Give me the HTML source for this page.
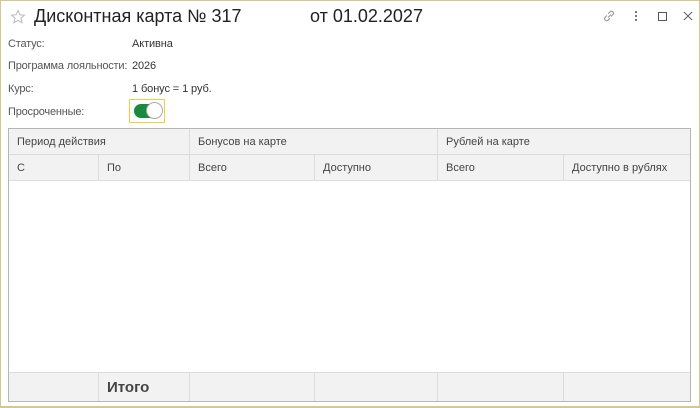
<!DOCTYPE html>
<html><head><meta charset="utf-8"><style>
*{margin:0;padding:0;box-sizing:border-box}
body{width:700px;height:408px;background:#fff;font-family:"Liberation Sans",sans-serif;position:relative;overflow:hidden}
.frame{position:absolute;left:0;top:0;width:700px;height:408px;border:1px solid #d2c98e;border-bottom:2px solid #d2c98e}
.t{position:absolute;white-space:nowrap}
.title{font-size:18px;color:#222;top:6px}
.lbl{font-size:11px;color:#555;letter-spacing:-0.2px}
.val{font-size:11px;color:#333;letter-spacing:-0.1px}
.grid{position:absolute;left:8px;top:128px;width:683px;height:274px;border:1px solid #b5b5b5;background:#fff}
.c{position:absolute;background:#f2f2f2;border-right:1px solid #dcdcdc;border-bottom:1px solid #dcdcdc;font-size:11px;color:#444;padding-left:8px;line-height:27px}
</style></head><body>
<div class="frame"></div>
<svg class="t" style="left:10px;top:9px" width="16" height="16" viewBox="0 0 16 16"><path d="M8 1.5l1.9 4.3 4.6.4-3.5 3 1.1 4.5L8 11.3 3.9 13.7 5 9.2 1.5 6.2l4.6-.4z" fill="none" stroke="#bbb" stroke-width="1"/></svg>
<div class="t title" style="left:34px">Дисконтная карта № 317</div>
<div class="t title" style="left:310px">от 01.02.2027</div>
<svg class="t" style="left:602px;top:9px" width="14" height="14" viewBox="0 0 14 14"><g fill="none" stroke="#999" stroke-width="1.1"><path d="M6 8.5l3-3"/><path d="M5 6.5L3 8.5a2 2 0 0 0 2.8 2.8l2-2"/><path d="M9 7.5l2-2A2 2 0 0 0 8.2 2.7l-2 2"/></g></svg>
<div class="t" style="left:635px;top:11px;width:2px;height:2px;background:#777;box-shadow:0 4px 0 #777,0 8px 0 #777"></div>
<div class="t" style="left:658px;top:12px;width:9px;height:9px;border:1px solid #555"></div>
<svg class="t" style="left:683px;top:11px" width="10" height="10" viewBox="0 0 10 10"><path d="M1 1l8 8M9 1l-8 8" stroke="#666" stroke-width="1.1"/></svg>
<div class="t lbl" style="left:8px;top:38px">Статус:</div><div class="t val" style="left:132px;top:38px">Активна</div>
<div class="t lbl" style="left:8px;top:60px">Программа лояльности:</div><div class="t val" style="left:132px;top:60px">2026</div>
<div class="t lbl" style="left:8px;top:83px">Курс:</div><div class="t val" style="left:132px;top:83px">1 бонус = 1 руб.</div>
<div class="t lbl" style="left:8px;top:106px">Просроченные:</div>
<div class="t" style="left:129px;top:99px;width:36px;height:24px;border:1px solid #f0cf3c"></div>
<div class="t" style="left:134px;top:104px;width:28px;height:14px;border-radius:7px;background:#1a8a3c"></div>
<div class="t" style="left:146px;top:102px;width:17px;height:17px;border-radius:50%;background:#fff;border:1px solid #aaa"></div>
<div class="grid">
<div class="c" style="left:0;top:0;width:181px;height:26px">Период действия</div>
<div class="c" style="left:181px;top:0;width:248px;height:26px">Бонусов на карте</div>
<div class="c" style="left:429px;top:0;width:252px;height:26px;border-right:none">Рублей на карте</div>
<div class="c" style="left:0;top:26px;width:90px;height:26px">С</div>
<div class="c" style="left:90px;top:26px;width:91px;height:26px">По</div>
<div class="c" style="left:181px;top:26px;width:125px;height:26px">Всего</div>
<div class="c" style="left:306px;top:26px;width:123px;height:26px">Доступно</div>
<div class="c" style="left:429px;top:26px;width:126px;height:26px">Всего</div>
<div class="c" style="left:555px;top:26px;width:126px;height:26px;border-right:none">Доступно в рублях</div>
<div class="c" style="left:0;top:243px;width:90px;height:29px;border-top:1px solid #dcdcdc;border-bottom:none"></div>
<div class="c" style="left:90px;top:243px;width:91px;height:29px;border-top:1px solid #dcdcdc;border-bottom:none;font-size:15px;font-weight:bold;color:#444;line-height:30px">Итого</div>
<div class="c" style="left:181px;top:243px;width:125px;height:29px;border-top:1px solid #dcdcdc;border-bottom:none"></div>
<div class="c" style="left:306px;top:243px;width:123px;height:29px;border-top:1px solid #dcdcdc;border-bottom:none"></div>
<div class="c" style="left:429px;top:243px;width:126px;height:29px;border-top:1px solid #dcdcdc;border-bottom:none"></div>
<div class="c" style="left:555px;top:243px;width:126px;height:29px;border-top:1px solid #dcdcdc;border-bottom:none;border-right:none"></div>
</div>
</body></html>
